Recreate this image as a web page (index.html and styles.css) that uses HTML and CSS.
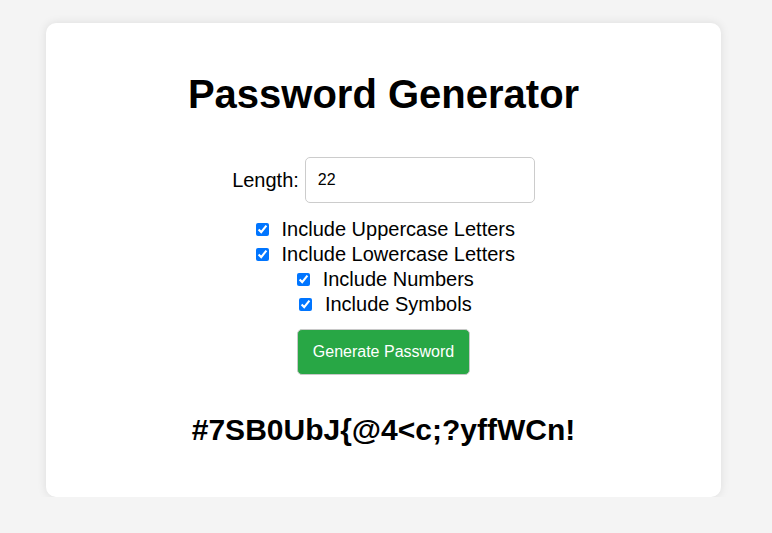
FILE: index.html
```html
<!DOCTYPE html>
<html lang="en">
<head>
<meta charset="utf-8">
<title>Password Generator</title>
<link rel="stylesheet" href="styles.css">
</head>
<body>
  <div class="container">
    <h1 class="title">Password Generator</h1>
    <div class="length-row">
      <label class="length-label" for="length">Length:</label>
      <input class="length-input" id="length" type="number" value="22">
    </div>
    <div class="options">
      <div class="option"><label><input class="check" type="checkbox" checked> Include Uppercase Letters</label></div>
      <div class="option"><label><input class="check" type="checkbox" checked> Include Lowercase Letters</label></div>
      <div class="option"><label><input class="check" type="checkbox" checked> Include Numbers</label></div>
      <div class="option"><label><input class="check" type="checkbox" checked> Include Symbols</label></div>
    </div>
    <button class="generate" type="button">Generate Password</button>
    <div class="result">#7SB0UbJ{@4&lt;c;?yffWCn!</div>
  </div>
</body>
</html>
```
FILE: styles.css
```css
html, body {
  margin: 0;
  padding: 0;
}
body {
  background: #f4f4f4;
  font-family: "Liberation Sans", Arial, sans-serif;
  font-size: 20px;
  color: #000;
  padding-top: 23px;
}
.container {
  box-sizing: border-box;
  width: 675px;
  height: 474px;
  margin-left: 46px;
  background: #fff;
  border-radius: 10px;
  box-shadow: 0 0 10px rgba(0, 0, 0, 0.1);
  padding: 20px;
  text-align: center;
  display: flex;
  flex-direction: column;
  align-items: center;
}
.title {
  font-size: 40px;
  line-height: 46px;
  font-weight: bold;
  margin: 28px 0 0 0;
}
.length-row {
  display: flex;
  align-items: center;
  justify-content: center;
  margin-top: 40px;
}
.length-label {
  margin-right: 6px;
  line-height: 23px;
}
.length-input {
  box-sizing: border-box;
  width: 230px;
  height: 46px;
  padding: 0 12px;
  border: 1px solid #ccc;
  border-radius: 5px;
  font-family: "Liberation Sans", Arial, sans-serif;
  font-size: 16px;
  color: #000;
  outline: none;
  -moz-appearance: textfield;
}
.length-input::-webkit-inner-spin-button,
.length-input::-webkit-outer-spin-button {
  -webkit-appearance: none;
  margin: 0;
}
.options {
  margin-top: 14px;
  display: flex;
  flex-direction: column;
  align-items: center;
}
.option {
  line-height: 25px;
}
.check {
  width: 13px;
  height: 13px;
  margin: 3px 7px 3px 4px;
  accent-color: #0075ff;
}
.generate {
  box-sizing: border-box;
  margin-top: 12px;
  width: 173px;
  height: 46px;
  background: #28a745;
  color: #fff;
  border: 1px solid #c8c8c8;
  border-radius: 5px;
  font-family: "Liberation Sans", Arial, sans-serif;
  font-size: 16px;
  padding: 0;
  cursor: pointer;
}
.result {
  margin-top: 37px;
  font-size: 30px;
  font-weight: bold;
  line-height: 35px;
}
```
